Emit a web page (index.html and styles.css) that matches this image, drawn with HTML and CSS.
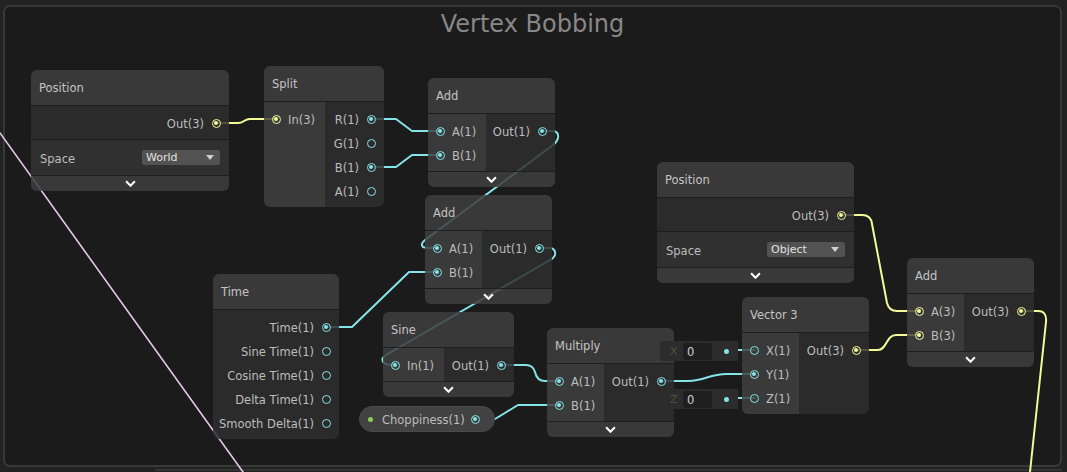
FILE: index.html
```html
<!DOCTYPE html>
<html>
<head>
<meta charset="utf-8">
<title>Vertex Bobbing</title>
<link rel="stylesheet" href="styles.css">
</head>
<body>
<div class="graph">
  <div class="group"><div class="group-title">Vertex Bobbing</div></div>
  <div class="hscroll"></div>

  <svg class="wires" viewBox="0 0 1067 472" xmlns="http://www.w3.org/2000/svg">
    <path class="w pink" d="M0,133 L243,472"/>
    <path class="w yel" d="M216.5,123 H238 C244,123 244,119 250,119 H276.5"/>
    <path class="w yel" d="M841.5,215 H862 Q871,215 872,224 L887,303 Q889,311 897,311 H919.5"/>
    <path class="w yel" d="M856.5,350 H878 C887,350 886,335 896,335 H919.5"/>
    <path class="w yel" d="M1021.5,311 H1038 Q1047,311 1046,322 L1030,472"/>
    <path class="w cy" d="M371.5,119 H396 L412,131 H440.5"/>
    <path class="w cy" d="M371.5,167 H396 L412,155 H440.5"/>
    <path class="w cy" d="M542.5,131 H552 Q559,131 558,138 Q557,142 553,145 L425,240 Q420,244 423,247 Q425,248 437.5,248"/>
    <path class="w cy" d="M539.5,248 H549 Q556,248 555,255 Q554,258 550,260 L386,355 Q380,359 384,363 Q387,365 395.5,365"/>
    <path class="w cy" d="M326.5,327 H352 L409,272 H437.5"/>
    <path class="w cy" d="M501.5,365 H526 Q533,365 535,372 Q537,381 545,381 H559.5"/>
    <path class="w cy" d="M475,419 H495 L518,405 H559.5"/>
    <path class="w cy" d="M661.5,381 H688 C706,381 708,374 727,374 H754.5"/>
    <path class="w cy" d="M727,350 H754.5"/>
    <path class="w cy" d="M727,398 H754.5"/>
  </svg>

  <!-- Position (World) -->
  <div class="node n-posl">
    <div class="hd">Position</div>
    <div class="outs"><div class="row o"><span>Out(3)</span><i class="port y on"></i></div></div>
    <div class="prop"><span>Space</span><div class="dd">World</div></div>
    <div class="chev"><svg viewBox="0 0 10 6"><path d="M1 1 L5 5 L9 1"/></svg></div>
  </div>

  <!-- Split -->
  <div class="node n-split">
    <div class="hd">Split</div>
    <div class="bd">
      <div class="ins w61"><div class="row i"><i class="port y on"></i><span>In(3)</span></div></div>
      <div class="outs">
        <div class="row o"><span>R(1)</span><i class="port c on"></i></div>
        <div class="row o"><span>G(1)</span><i class="port c"></i></div>
        <div class="row o"><span>B(1)</span><i class="port c on"></i></div>
        <div class="row o"><span>A(1)</span><i class="port c"></i></div>
      </div>
    </div>
  </div>

  <!-- Add 1 -->
  <div class="node n-add1">
    <div class="hd">Add</div>
    <div class="bd">
      <div class="ins w58">
        <div class="row i"><i class="port c on"></i><span>A(1)</span></div>
        <div class="row i"><i class="port c on"></i><span>B(1)</span></div>
      </div>
      <div class="outs"><div class="row o"><span>Out(1)</span><i class="port c on"></i></div></div>
    </div>
    <div class="chev"><svg viewBox="0 0 10 6"><path d="M1 1 L5 5 L9 1"/></svg></div>
  </div>

  <!-- Add 2 -->
  <div class="node n-add2">
    <div class="hd">Add</div>
    <div class="bd">
      <div class="ins w57">
        <div class="row i"><i class="port c on"></i><span>A(1)</span></div>
        <div class="row i"><i class="port c on"></i><span>B(1)</span></div>
      </div>
      <div class="outs"><div class="row o"><span>Out(1)</span><i class="port c on"></i></div></div>
    </div>
    <div class="chev"><svg viewBox="0 0 10 6"><path d="M1 1 L5 5 L9 1"/></svg></div>
  </div>

  <!-- Time -->
  <div class="node n-time">
    <div class="hd">Time</div>
    <div class="outs">
      <div class="row o"><span>Time(1)</span><i class="port c on"></i></div>
      <div class="row o"><span>Sine Time(1)</span><i class="port c"></i></div>
      <div class="row o"><span>Cosine Time(1)</span><i class="port c"></i></div>
      <div class="row o"><span>Delta Time(1)</span><i class="port c"></i></div>
      <div class="row o"><span>Smooth Delta(1)</span><i class="port c"></i></div>
    </div>
  </div>

  <!-- Sine -->
  <div class="node n-sine">
    <div class="hd">Sine</div>
    <div class="bd">
      <div class="ins w61"><div class="row i"><i class="port c on"></i><span>In(1)</span></div></div>
      <div class="outs"><div class="row o"><span>Out(1)</span><i class="port c on"></i></div></div>
    </div>
    <div class="chev"><svg viewBox="0 0 10 6"><path d="M1 1 L5 5 L9 1"/></svg></div>
  </div>

  <!-- Choppiness property -->
  <div class="pill"><i class="gdot"></i><span>Choppiness(1)</span><i class="port c on"></i></div>

  <!-- Multiply -->
  <div class="node n-mult">
    <div class="hd">Multiply</div>
    <div class="bd">
      <div class="ins w57">
        <div class="row i"><i class="port c on"></i><span>A(1)</span></div>
        <div class="row i"><i class="port c on"></i><span>B(1)</span></div>
      </div>
      <div class="outs"><div class="row o"><span>Out(1)</span><i class="port c on"></i></div></div>
    </div>
    <div class="chev"><svg viewBox="0 0 10 6"><path d="M1 1 L5 5 L9 1"/></svg></div>
  </div>

  <!-- Inline value fields -->
  <div class="field fx"><span class="flab">X</span><span class="num">0</span><i class="fdot"></i></div>
  <div class="field fz"><span class="flab">Z</span><span class="num">0</span><i class="fdot"></i></div>

  <!-- Vector 3 -->
  <div class="node n-vec3">
    <div class="hd">Vector 3</div>
    <div class="bd">
      <div class="ins w57">
        <div class="row i"><i class="port c"></i><span>X(1)</span></div>
        <div class="row i"><i class="port c on"></i><span>Y(1)</span></div>
        <div class="row i"><i class="port c"></i><span>Z(1)</span></div>
      </div>
      <div class="outs"><div class="row o"><span>Out(3)</span><i class="port y on"></i></div></div>
    </div>
  </div>

  <!-- Position (Object) -->
  <div class="node n-posr">
    <div class="hd">Position</div>
    <div class="outs"><div class="row o"><span>Out(3)</span><i class="port y on"></i></div></div>
    <div class="prop"><span>Space</span><div class="dd">Object</div></div>
    <div class="chev"><svg viewBox="0 0 10 6"><path d="M1 1 L5 5 L9 1"/></svg></div>
  </div>

  <!-- Add (right) -->
  <div class="node n-addr">
    <div class="hd">Add</div>
    <div class="bd">
      <div class="ins w57">
        <div class="row i"><i class="port y on"></i><span>A(3)</span></div>
        <div class="row i"><i class="port y on"></i><span>B(3)</span></div>
      </div>
      <div class="outs"><div class="row o"><span>Out(3)</span><i class="port y on"></i></div></div>
    </div>
    <div class="chev"><svg viewBox="0 0 10 6"><path d="M1 1 L5 5 L9 1"/></svg></div>
  </div>
</div>
</body>
</html>
```
FILE: styles.css
```css
* { box-sizing: border-box; }
html, body { margin: 0; background: #222222; }
body {
  font-family: "DejaVu Sans", Verdana, sans-serif;
  font-size: 11.5px;
  color: #bdbdbd;
}
.graph {
  position: relative;
  width: 1067px;
  height: 472px;
  padding: 5px 5px 0 3px;
  overflow: hidden;
}
.group {
  height: 462px;
  border: 2px solid #383838;
  border-radius: 7px;
  background: #1b1b1b;
}
.group-title {
  text-align: center;
  font-size: 24px;
  line-height: 30px;
  margin-top: 2px;
  color: #888888;
}
.hscroll {
  height: 2px;
  margin: 2px 0 0 152px;
  background: #333333;
}

.wires { position: absolute; left: 0; top: 0; width: 1067px; height: 472px; }
.w { fill: none; stroke-width: 2; stroke-linejoin: round; stroke-linecap: round; }
.cy { stroke: #84e4e7; }
.yel { stroke: #f4f99a; }
.pink { stroke: #e9c6ec; stroke-width: 1.6; }

.node {
  position: absolute;
  border-radius: 6px;
  overflow: hidden;
  display: flex;
  flex-direction: column;
}
.n-posl { left: 31px; top: 70px; width: 198px; }
.n-split { left: 264px; top: 66px; width: 120px; }
.n-add1 { left: 428px; top: 78px; width: 127px; }
.n-add2 { left: 425px; top: 195px; width: 127px; }
.n-time { left: 213px; top: 274px; width: 126px; }
.n-sine { left: 383px; top: 312px; width: 131px; }
.n-mult { left: 547px; top: 328px; width: 127px; }
.n-vec3 { left: 742px; top: 297px; width: 127px; }
.n-posr { left: 657px; top: 162px; width: 197px; }
.n-addr { left: 907px; top: 258px; width: 127px; }

.hd {
  height: 36px;
  line-height: 37px;
  padding-left: 8px;
  background: rgba(63, 63, 63, 0.86);
  border-bottom: 1px solid rgba(28, 28, 28, 0.9);
  color: #c4c4c4;
  white-space: nowrap;
}
.bd { display: flex; }
.ins {
  flex: none;
  background: rgba(64, 64, 64, 0.84);
  padding: 5px 0 4px;
}
.w57 { width: 57px; }
.w58 { width: 58px; }
.w61 { width: 61px; }
.outs {
  flex: 1;
  background: rgba(46, 46, 46, 0.84);
  padding: 5px 0 4px;
}
.row {
  height: 24px;
  display: flex;
  align-items: center;
  white-space: nowrap;
}
.row span { padding-top: 2px; }
.row.i { padding-left: 8px; gap: 7px; }
.row.o { justify-content: flex-end; padding-right: 8px; gap: 8px; }

.port {
  flex: none;
  width: 9px;
  height: 9px;
  border: 1.5px solid currentColor;
  border-radius: 50%;
  position: relative;
}
.port.on::after {
  content: "";
  position: absolute;
  left: 1px;
  top: 1px;
  width: 4px;
  height: 4px;
  border-radius: 50%;
  background: currentColor;
}
.c { color: #84e4e7; }
.y { color: #f4f99a; }

.prop {
  height: 36px;
  display: flex;
  align-items: center;
  justify-content: space-between;
  padding: 0 9px;
  background: rgba(52, 52, 52, 0.86);
  border-top: 1px solid rgba(28, 28, 28, 0.9);
}
.prop > span { padding-top: 2px; }
.dd {
  position: relative;
  width: 78px;
  height: 15px;
  line-height: 16px;
  padding-left: 4px;
  background: #525252;
  border-radius: 2px;
  color: #e2e2e2;
  font-size: 11px;
}
.dd::after {
  content: "";
  position: absolute;
  right: 6px;
  top: 5px;
  border-left: 4px solid transparent;
  border-right: 4px solid transparent;
  border-top: 5px solid #d0d0d0;
}
.chev {
  height: 16px;
  display: flex;
  align-items: center;
  justify-content: center;
  background: rgba(63, 63, 63, 0.86);
  border-top: 1px solid rgba(28, 28, 28, 0.9);
}
.chev svg { width: 11px; height: 7px; }
.chev path { fill: none; stroke: #ffffff; stroke-width: 1.9; }

.pill {
  position: absolute;
  left: 359px;
  top: 406px;
  width: 136px;
  height: 26px;
  border-radius: 13px;
  background: #424242;
  border: 1px solid #4a4a4a;
  display: flex;
  align-items: center;
  padding: 0 14px 0 8px;
  white-space: nowrap;
}
.pill span { margin-left: 9px; padding-top: 2px; }
.pill .port { margin-left: auto; }
.gdot {
  width: 5px;
  height: 5px;
  border-radius: 50%;
  background: #8ed052;
}

.field {
  position: absolute;
  left: 660px;
  width: 78px;
  height: 20px;
  background: #2c2c2c;
  display: flex;
  align-items: center;
  padding-left: 10px;
}
.fx { top: 341px; }
.fz { top: 389px; }
.flab { width: 13px; color: #4c4c4c; font-size: 11px; }
.num {
  width: 29px;
  height: 17px;
  line-height: 18px;
  padding-left: 4px;
  background: #1f1f1f;
  border-radius: 3px;
  color: #d2d2d2;
  font-size: 11.5px;
}
.fdot {
  width: 5px;
  height: 5px;
  border-radius: 50%;
  background: #84e4e7;
  margin-left: 12px;
}
```
